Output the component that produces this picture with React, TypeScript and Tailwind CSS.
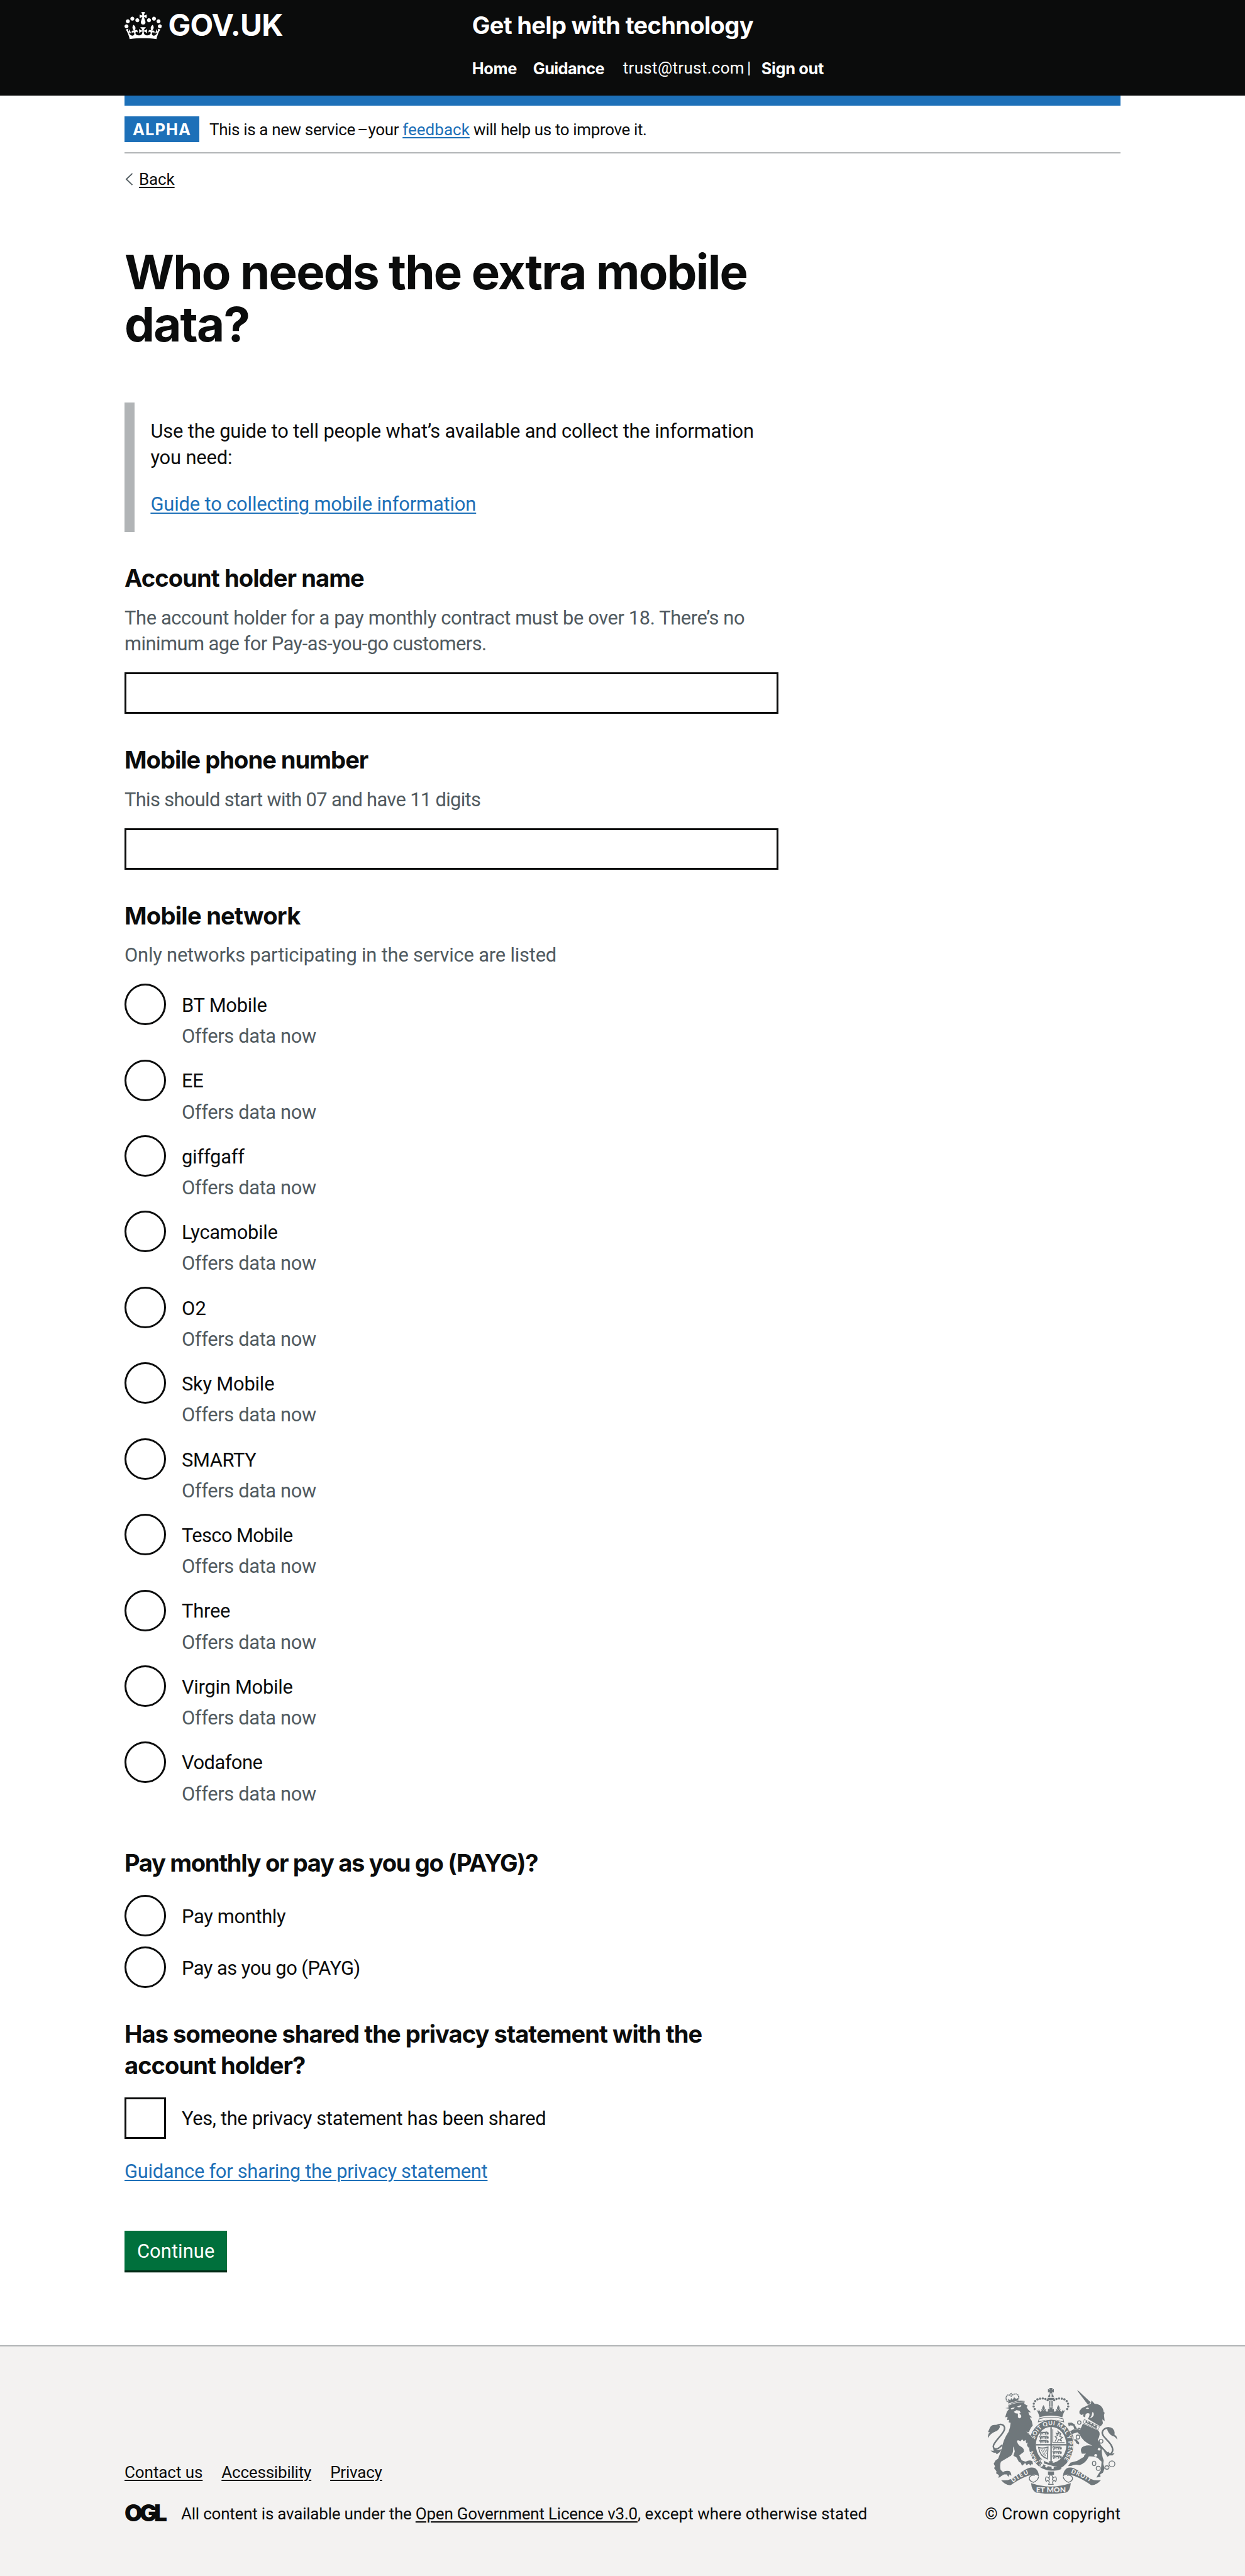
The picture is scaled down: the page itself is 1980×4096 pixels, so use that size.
import type { ReactNode } from "react";

const networks: { name: string; tracking: string }[] = [
  { name: "BT Mobile", tracking: "tracking-[-0.007em]" },
  { name: "EE", tracking: "tracking-[-0.01em]" },
  { name: "giffgaff", tracking: "tracking-[-0.007em]" },
  { name: "Lycamobile", tracking: "tracking-[-0.009em]" },
  { name: "O2", tracking: "tracking-[0.01em]" },
  { name: "Sky Mobile", tracking: "tracking-[-0.007em]" },
  { name: "SMARTY", tracking: "tracking-[-0.012em]" },
  { name: "Tesco Mobile", tracking: "tracking-[-0.02em]" },
  { name: "Three", tracking: "tracking-[-0.007em]" },
  { name: "Virgin Mobile", tracking: "tracking-[-0.009em]" },
  { name: "Vodafone", tracking: "tracking-[-0.017em]" },
];

const LINK = "underline decoration-[1.65px] underline-offset-[3px]";
const BODY = "font-['Roboto',sans-serif] text-[30.87px] leading-[41.25px]";
const SMALL = "font-['Roboto',sans-serif] text-[26px] leading-[33px]";
const HEADING = "font-['Inter',sans-serif] text-[38.13px] font-bold leading-[49.5px]";

function CrownIcon() {
  return (
    <svg viewBox="0 0 132 97" className="h-[43.6px] w-[59.4px] fill-current" aria-hidden="true">
      <path
        fillRule="evenodd"
        d="M25 30.2c3.5 1.5 7.7-.2 9.1-3.7 1.5-3.6-.2-7.8-3.9-9.2-3.6-1.4-7.6.3-9.1 3.9-1.4 3.5.3 7.5 3.9 9zM9 39.5c3.6 1.5 7.8-.2 9.2-3.7 1.5-3.6-.2-7.8-3.9-9.1-3.6-1.5-7.6.2-9.1 3.8-1.4 3.5.3 7.5 3.8 9zM4.4 57.2c3.5 1.5 7.7-.2 9.1-3.8 1.5-3.6-.2-7.7-3.9-9.1-3.5-1.5-7.6.3-9.1 3.8-1.4 3.5.3 7.6 3.9 9.1zm38.3-21.4c3.5 1.5 7.7-.2 9.1-3.8 1.5-3.6-.2-7.7-3.9-9.1-3.6-1.5-7.6.3-9.1 3.8-1.3 3.6.4 7.7 3.9 9.1zm64.4-5.6c-3.6 1.5-7.8-.2-9.1-3.7-1.5-3.6.2-7.8 3.8-9.2 3.6-1.4 7.7.3 9.2 3.9 1.3 3.5-.4 7.5-3.9 9zm15.9 9.3c-3.6 1.5-7.7-.2-9.1-3.7-1.5-3.6.2-7.8 3.7-9.1 3.6-1.5 7.7.2 9.2 3.8 1.5 3.5-.3 7.5-3.8 9zm4.7 17.7c-3.6 1.5-7.8-.2-9.2-3.8-1.5-3.6.2-7.7 3.9-9.1 3.6-1.5 7.7.3 9.2 3.8 1.3 3.5-.4 7.6-3.9 9.1zM89.3 35.8c-3.6 1.5-7.8-.2-9.2-3.8-1.4-3.6.2-7.7 3.9-9.1 3.6-1.5 7.7.3 9.2 3.8 1.4 3.6-.3 7.7-3.9 9.1zM69.7 17.7l8.9 4.7V9.3l-8.9 2.8c-.2-.3-.5-.6-.9-.9L72.4 0H59.6l3.5 11.2c-.3.3-.6.5-.9.9l-8.8-2.8v13.1l8.8-4.7c.3.3.6.7.9.9l-5 15.4v.1c-.2.8-.4 1.6-.4 2.4 0 4.1 3.1 7.5 7 8.1h.2c.3 0 .7.1 1 .1.4 0 .7 0 1-.1h.2c4-.6 7.1-4.1 7.1-8.1 0-.8-.1-1.7-.4-2.4V34l-5.1-15.4c.4-.2.7-.6 1-.9zM66 92.8c16.9 0 32.8 1.1 47.1 3.2 4-16.9 8.9-26.7 14-33.5l-9.6-3.4c1 4.9 1.1 7.2 0 10.2-1.5-1.4-3-4.3-4.2-8.7L108.6 76c2.8-2 5-3.2 7.5-3.3-4.4 9.4-10 11.9-13.6 11.2-4.3-.8-6.3-4.6-5.6-7.9 1-4.7 5.7-5.9 8-.5 4.3-8.7-3-11.4-7.6-8.8 7.1-7.2 7.9-13.5 2.1-21.1-8 6.1-8.1 12.3-4.5 20.8-4.7-5.4-12.1-2.5-9.5 6.2 3.4-5.2 7.9-2 7.2 3.1-.6 4.3-6.4 7.8-13.5 7.2-10.3-.9-10.9-8-11.2-13.8 2.5-.5 7.1 1.8 11 7.3L80.2 60c-4.1 4.4-8 5.3-12.3 5.4 1.4-4.4 8-11.6 8-11.6H55.5s6.4 7.2 7.9 11.6c-4.2-.1-8-1-12.3-5.4l1.4 16.4c3.9-5.5 8.5-7.7 10.9-7.3-.3 5.8-.9 12.8-11.1 13.8-7.2.6-12.9-2.9-13.5-7.2-.7-5 3.8-8.3 7.1-3.1 2.7-8.7-4.6-11.6-9.4-6.2 3.7-8.5 3.6-14.7-4.6-20.8-5.8 7.6-5 13.9 2.2 21.1-4.7-2.6-11.9.1-7.7 8.8 2.3-5.5 7.1-4.2 8.1.5.7 3.3-1.3 7.1-5.7 7.9-3.5.7-9-1.8-13.5-11.2 2.5.1 4.7 1.3 7.5 3.3l-4.7-15.4c-1.2 4.4-2.7 7.2-4.3 8.7-1.1-3-.9-5.3 0-10.2l-9.5 3.4c5 6.9 9.9 16.7 14 33.5 14.8-2.1 30.8-3.2 47.7-3.2z"
      />
    </svg>
  );
}

function CrownHalf() {
  const pearls = [
    [343, 188],
    [337, 173],
    [338, 157],
    [346, 142],
    [359, 132],
    [374, 128],
    [390, 127],
    [405, 130],
    [418, 137],
  ];
  return (
    <g>
      {pearls.map(([x, y]) => (
        <circle key={`${x}-${y}`} cx={x} cy={y} r="6.6" />
      ))}
      <path d="M438 226C412 226 390 229 371 236C368 220 362 205 354 194L366 200L366 190L376 204L384 196L380 188Q392 192 394 198Q398 190 410 188L405 198L415 204L424 192L428 206L438 208Z" />
      <path d="M394 165Q406 182 400 190L394 196L388 190Q382 182 394 165Z" />
    </g>
  );
}

function LionPassant({ x, y }: { x: number; y: number }) {
  return (
    <path
      transform={`translate(${x} ${y})`}
      d="M0 6L6 1L12 4L38 4L42 0M12 5L10 16L4 18M18 8L22 17M32 6L36 13L32 18M40 6L46 10L44 18M50 16Q54 8 46 2M2 10L10 10M20 6L34 7"
      fill="none"
      stroke="#6f777b"
      strokeWidth="5.5"
    />
  );
}

function RoyalArms() {
  const light = "#f3f2f1";
  return (
    <svg viewBox="72 66 750 612" className="h-[168.3px] w-[206.2px]" fill="#6f777b" role="img" aria-label="Royal coat of arms">
      <defs>
        <path id="garter-main" d="M343 364A100 118 0 1 1 480 506" />
        <path id="garter-left" d="M366 492A108 124 0 0 1 332 424" />
        <path id="ribbon-left" d="M218 614Q262 578 316 560" />
        <path id="ribbon-right" d="M552 556Q612 578 668 612" />
      </defs>

      {/* Lion */}
      <path d="M184 144Q170 120 186 108Q198 103 207 113Q224 96 240 102Q256 112 249 132" fill="none" stroke="#6f777b" strokeWidth="8" strokeLinecap="round" strokeDasharray="0 10.5" />
      <path d="M190 128L202 138L207 124L216 134L224 120L236 130L246 124L250 138L190 156ZM202 96L210 94L209 104L204 105Z" />
      <path d="M173 182L192 180L190 164Q230 142 262 140L285 141L283 158L304 170L296 176L304 190L322 207L306 206L312 222L328 236L314 238L326 256L332 284Q318 296 310 322L292 318Q318 346 336 370L346 402L340 414L330 404L326 424L316 404L308 412L298 396L306 376L294 386L290 366L280 374L270 362L262 374Q246 364 240 372Q246 398 268 408Q284 418 280 436Q266 446 254 456Q262 472 268 484L290 492Q314 480 330 490L334 510L326 504L320 516L310 504L296 512L288 500L270 516L262 498L252 494L238 468L220 458L228 432Q226 414 218 404Q222 440 206 458L148 492Q140 510 146 540L160 552Q172 542 196 546Q208 554 208 574L198 566L190 580L182 566L166 566L152 574L134 587L136 570L120 560L122 548L108 530L114 520L106 504L116 486L132 474L152 420Q160 366 192 320Q202 296 204 268L192 264L196 250L184 252L186 232L172 236L182 204L196 186Z" />
      <path d="M205 184Q218 178 228 180Q222 192 207 190ZM240 174L266 164Q264 178 250 178ZM222 204L238 194L256 198L262 210L254 214Q270 224 264 236Q256 246 246 236L246 214L232 212Z" fill={light} />
      <path d="M192 166Q232 148 284 146" fill="none" stroke={light} strokeWidth="3" />
      <path d="M154 396C120 436 88 416 112 384C138 346 176 316 168 292C162 272 134 274 122 286" fill="none" stroke="#6f777b" strokeWidth="9" />
      <path d="M72 356Q70 336 84 320Q68 328 78 310Q88 276 114 280Q140 276 142 290Q138 310 116 318Q88 328 72 356ZM88 428L106 430L102 412L126 426L154 420Q144 438 124 450L116 440Q104 444 88 428Z" />

      {/* Unicorn */}
      <path d="M588 80L598 84L668 150L652 164Z" />
      <path d="M602 200L616 182L648 168L668 156L672 138L690 158Q736 160 742 204L748 210L744 222L748 258L734 248L738 270Q732 284 722 288L650 244Q662 232 660 214Q646 208 638 218L634 236L622 230L626 218L612 222L602 212Z" />
      <path d="M638 184Q650 176 658 184Q650 190 638 184ZM684 210Q690 234 662 242Q676 226 676 206Z" fill={light} />
      <path d="M630 248L718 290L710 308L624 268Z" fill={light} stroke="#6f777b" strokeWidth="3" />
      <path d="M634 264L644 254L650 268L662 260L668 276L680 268L686 286L700 280L704 302Z" />
      <path d="M622 272L712 312Q728 332 708 366Q722 384 732 410Q728 452 742 484L740 506L748 530L738 556L722 566L724 580L700 584L710 566L726 542L730 492L706 470Q680 460 656 462Q640 500 602 512Q574 506 556 516L536 518L550 498L588 488L628 464Q630 452 640 446L616 446Q600 412 630 402Q650 394 676 400Q620 376 604 336L590 322L560 332Q572 352 566 364L584 362L602 384L598 392L584 386L578 372L560 362Q548 340 542 320L570 304L606 308Z" />
      <path d="M536 268L556 266L574 276L580 290L600 296L612 300L596 306L572 302L566 284L550 282L540 288Z" />
      <path d="M724 402C760 440 778 470 794 430C800 380 720 350 736 316C744 300 758 296 772 298" fill="none" stroke="#6f777b" strokeWidth="9" />
      <path d="M750 298Q772 286 794 300Q810 318 804 334L816 346L822 366Q806 344 790 342Q766 326 762 302ZM740 428L760 446L768 434L782 448L806 442L794 456L776 456L764 464Z" />
      <g fill="none" stroke="#6f777b" strokeWidth="5">
        <circle cx="601" cy="266" r="10" />
        <ellipse cx="593" cy="350" rx="10" ry="12" fill={light} />
        <circle cx="727" cy="374" r="11" />
        <ellipse cx="687" cy="502" rx="10" ry="13" />
        <circle cx="711" cy="531" r="12" />
        <ellipse cx="761" cy="526" rx="12" ry="10" />
        <circle cx="790" cy="505" r="17" />
      </g>
      <g fill={light}>
        <circle cx="716" cy="420" r="8" />
        <circle cx="696" cy="456" r="8" />
        <circle cx="590" cy="294" r="7" />
      </g>

      {/* Crown */}
      <CrownHalf />
      <g transform="matrix(-1 0 0 1 874 0)">
        <CrownHalf />
      </g>
      <path d="M427 66H447L443 76L454 72V92L443 88L447 98H427L431 88L420 92V72L431 76Z" />
      <path d="M420 118Q422 104 433 101V118ZM441 101Q452 104 454 118H441ZM416 123H458Q456 138 437 138Q418 138 416 123ZM427 141H434V174H427ZM440 141H447V174H440ZM424 178H450L443 190L454 186V206H420V186L431 190Z" />
      <path d="M369 244Q437 226 507 244L511 262Q437 240 364 262Z" fill={light} stroke="#6f777b" strokeWidth="4" />

      {/* Garter and shield */}
      <ellipse cx="438" cy="397" rx="131" ry="150" fill={light} />
      <ellipse cx="438" cy="397" rx="128" ry="147" />
      <ellipse cx="438" cy="395" rx="88" ry="104" fill={light} />
      <path d="M434 292H442V498H434ZM350 391H526V399H350Z" />
      <path d="M424 490L450 490L446 500H428Z" />
      <LionPassant x={370} y={318} />
      <LionPassant x={370} y={342} />
      <LionPassant x={370} y={366} />
      <LionPassant x={446} y={404} />
      <LionPassant x={446} y={430} />
      <LionPassant x={446} y={456} />
      <path d="M448 304V382H516M460 376L472 356L462 348L476 340L468 328L484 332L478 318L494 330L488 346L504 352L492 362L500 374L482 364L474 378" fill="none" stroke="#6f777b" strokeWidth="5" />
      <path d="M366 410Q390 418 420 408L416 476Q372 460 366 410Z" fill="none" stroke="#6f777b" strokeWidth="6" />
      <path d="M378 418L400 460M388 418L408 462M398 416L412 448M408 414L414 432" stroke="#6f777b" strokeWidth="3" />
      <g fill={light} className="font-['Lato',sans-serif] font-bold" fontSize="34">
        <text textLength="394" lengthAdjust="spacing">
          <textPath href="#garter-main">SOIT QUI MAL Y PENSE</textPath>
        </text>
        <text textLength="72" lengthAdjust="spacing">
          <textPath href="#garter-left">HON</textPath>
        </text>
      </g>
      <path d="M374 480Q364 492 378 498Q364 514 372 524Q380 528 386 518L500 540L504 532L396 502Q400 482 386 480Z" fill={light} />
      <path d="M392 508Q436 528 486 524L500 534Q440 560 390 518Z" />
      <circle cx="411" cy="519" r="7" fill={light} />
      <circle cx="447" cy="528" r="7" fill={light} />
      <path d="M378 486Q368 492 384 500Q368 512 376 520M292 318Q320 340 338 380" fill="none" stroke="#6f777b" strokeWidth="5" />
      <path d="M296 332L322 344Q340 366 346 402L340 414L330 404L326 424L316 404L304 408Z" />

      {/* Motto ribbon */}
      <path d="M148 598Q180 604 206 592L286 540Q318 518 345 530Q366 544 368 578Q352 562 326 570Q280 576 206 627Q176 632 148 598Z" />
      <path d="M727 598Q694 604 668 592L588 540Q556 518 530 530Q509 544 506 578Q522 562 548 570Q594 576 668 627Q698 632 727 598Z" />
      <path d="M366 578Q364 600 336 612Q310 604 312 586Q318 568 344 572M508 578Q510 600 538 612Q564 604 562 586Q556 568 530 572" fill="none" stroke="#6f777b" strokeWidth="5" />
      <path d="M322 616Q380 636 437 636Q494 636 552 616Q548 664 522 672Q437 684 352 672Q326 660 322 616Z" />
      <g fill={light} className="font-['Lato',sans-serif] font-black">
        <text fontSize="34" textLength="104" lengthAdjust="spacing">
          <textPath href="#ribbon-left">DIEU</textPath>
        </text>
        <text fontSize="34" textLength="124" lengthAdjust="spacing">
          <textPath href="#ribbon-right">DROIT</textPath>
        </text>
        <text x="437" y="668" fontSize="44" textAnchor="middle" textLength="172">
          ET MON
        </text>
      </g>
      <path d="M420 549H455V568H420Z" />
      <path d="M437 564Q454 582 444 600Q448 580 464 580Q474 592 464 606L454 600L446 610L450 624H424L428 610L420 600L410 606Q400 592 410 580Q426 580 430 600Q420 582 437 564Z" fill={light} stroke="#6f777b" strokeWidth="5" />
    </svg>
  );
}

function FieldHeading({ children, className }: { children: ReactNode; className: string }) {
  return <h2 className={`${HEADING} ${className}`}>{children}</h2>;
}

function Radio({ label, hint, className }: { label: string; hint?: string; className: string }) {
  return (
    <div className={hint ? "flex h-[120.45px] items-start" : "flex h-[82.5px] items-start"}>
      <span className="size-[66px] shrink-0 rounded-full border-[3.3px] border-[#0b0c0c]" />
      <div className={`${BODY} pl-[25px] pt-[13.8px]`}>
        <div className={className}>{label}</div>
        {hint && <div className="mt-[8px] tracking-[-0.0118em] text-[#505a5f]">{hint}</div>}
      </div>
    </div>
  );
}

export default function App() {
  return (
    <div className="flex h-[4096px] w-[1980px] flex-col overflow-hidden bg-white text-[#0b0c0c]">
      <header className="h-[152px] shrink-0 bg-[#0b0c0c] px-[198px] text-white">
        <div className="flex">
          <div className="flex w-[552.8px] gap-[10px] pt-[19px]">
            <CrownIcon />
            <span className="-mt-[8.6px] h-[60px] font-['Inter',sans-serif] text-[47.7px] font-bold leading-[60px] tracking-[-0.0155em]">
              GOV.UK
            </span>
          </div>
          <div className="pt-[16.2px] whitespace-nowrap">
            <div className={`${HEADING} tracking-[-0.0185em]`}>Get help with technology</div>
            <nav className="mt-[26.2px] flex font-['Inter',sans-serif] text-[25.4px] font-bold leading-[33px]">
              <span className="w-[97px] tracking-[-0.0176em]">Home</span>
              <span className="w-[143px] tracking-[-0.0254em]">Guidance</span>
              <span className="w-[220px] font-['Roboto',sans-serif] text-[26px] font-normal tracking-[0.0117em]">
                trust@trust.com<span className="tracking-[-0.09em]"> </span>|
              </span>
              <span className="tracking-[-0.0147em]">Sign out</span>
            </nav>
          </div>
        </div>
      </header>

      <main className="mx-[198px] flex shrink-0 flex-col items-start border-t-[16.5px] border-[#1d70b8]">
        <div className="flex h-[76px] w-full items-start border-b-2 border-[#b1b4b6] pt-[17px]">
          <strong className="h-[41px] w-[119px] bg-[#1d70b8] text-center font-['Inter',sans-serif] text-[25.4px] font-bold leading-[41px] tracking-[0.04em] text-white">
            ALPHA
          </strong>
          <p className={`${SMALL} ml-[16px] mt-[5px] whitespace-nowrap tracking-[-0.014em]`}>
            This is a new service<span className="tracking-[-0.12em]"> – </span>your{" "}
            <a className={`${LINK} tracking-[0.001em] text-[#1d70b8]`}>feedback</a> will help us to improve it.
          </p>
        </div>

        <a className="mt-[24.6px] flex h-[33px] items-center">
          <svg viewBox="0 0 14 22" className="ml-[1px] h-[20px] w-[13px]" fill="none" stroke="#505a5f" strokeWidth="2">
            <path d="M12.5 1L2 11L12.5 21" />
          </svg>
          <span className={`${SMALL} ${LINK} ml-[9px] tracking-[-0.005em]`}>Back</span>
        </a>

        <h1 className="mt-[89.6px] w-[1040px] font-['Inter',sans-serif] text-[76.2px] font-bold leading-[82.5px] tracking-[-0.0239em]">
          Who needs the extra mobile data?
        </h1>

        <div className={`${BODY} mt-[84px] h-[206px] w-[1040px] border-l-[16.5px] border-[#b1b4b6] pl-[25.4px] pt-[25.2px]`}>
          <p className="whitespace-nowrap tracking-[-0.0051em]">
            Use the guide to tell people what’s available and collect the information
            <br />
            you need:
          </p>
          <a className={`${LINK} mt-[33.2px] block tracking-[-0.0047em] text-[#1d70b8]`}>Guide to collecting mobile information</a>
        </div>

        <FieldHeading className="mt-[49.2px] tracking-[-0.0243em]">Account holder name</FieldHeading>
        <p className={`${BODY} mt-[17px] tracking-[-0.0125em] whitespace-nowrap text-[#505a5f]`}>
          The account holder for a pay monthly contract must be over 18. There’s no
          <br />
          <span className="tracking-[-0.0175em]">minimum age for Pay-as-you-go customers.</span>
        </p>
        <input className="mt-[24.8px] h-[66px] w-[1039.5px] border-[3.3px] border-[#0b0c0c] px-2" />

        <FieldHeading className="mt-[48.9px] tracking-[-0.0264em]">Mobile phone number</FieldHeading>
        <p className={`${BODY} mt-[17.2px] tracking-[-0.0215em] text-[#505a5f]`}>This should start with 07 and have 11 digits</p>
        <input className="mt-[24.7px] h-[66px] w-[1039.5px] border-[3.3px] border-[#0b0c0c] px-2" />

        <FieldHeading className="mt-[48.9px] tracking-[-0.0195em]">Mobile network</FieldHeading>
        <p className={`${BODY} mt-[16.8px] tracking-[-0.0061em] text-[#505a5f]`}>Only networks participating in the service are listed</p>
        <div className="mt-[25px] flex flex-col">
          {networks.map((n) => (
            <Radio key={n.name} label={n.name} hint="Offers data now" className={n.tracking} />
          ))}
        </div>

        <FieldHeading className="mt-[48.9px] tracking-[-0.0354em]">Pay monthly or pay as you go (PAYG)?</FieldHeading>
        <div className="mt-[25.4px] flex flex-col">
          <Radio label="Pay monthly" className="tracking-[-0.011em]" />
          <Radio label="Pay as you go (PAYG)" className="tracking-[-0.017em]" />
        </div>

        <FieldHeading className="mt-[32.4px] tracking-[-0.0255em] whitespace-nowrap">
          Has someone shared the privacy statement with the
          <br />
          account holder?
        </FieldHeading>
        <div className="mt-[25.4px] flex h-[66px]">
          <span className="size-[66px] border-[3.3px] border-[#0b0c0c]" />
          <span className={`${BODY} pl-[25px] pt-[13.8px] tracking-[-0.0106em]`}>Yes, the privacy statement has been shared</span>
        </div>
        <a className={`${BODY} ${LINK} mt-[31.2px] tracking-[-0.0091em] text-[#1d70b8]`}>Guidance for sharing the privacy statement</a>

        <button className={`${BODY} mt-[74.4px] h-[62.7px] w-[163.3px] bg-[#00703c] pt-[2px] tracking-[0.003em] text-white shadow-[0_3.3px_0_#002d18]`}>
          Continue
        </button>
      </main>

      <footer className="mt-[118.8px] flex grow items-end justify-between border-t-2 border-[#b1b4b6] bg-[#f3f2f1] px-[198px] pb-[82.4px]">
        <div className={SMALL}>
          <div className="flex gap-[30px]">
            <a className={`${LINK} tracking-[-0.003em]`}>Contact us</a>
            <a className={`${LINK} tracking-[-0.0079em]`}>Accessibility</a>
            <a className={`${LINK} tracking-[-0.008em]`}>Privacy</a>
          </div>
          <div className="mt-[33px] flex h-[33px]">
            <span className="w-[90px] font-['Inter',sans-serif] text-[37px] font-black leading-[30px] tracking-[-0.13em]">OGL</span>
            <p className="whitespace-nowrap tracking-[-0.0085em]">
              All content is available under the <a className={LINK}>Open Government Licence v3.0</a>
              <span className="tracking-[0.001em]">, except where otherwise stated</span>
            </p>
          </div>
        </div>
        <div className="flex flex-col items-center">
          <RoyalArms />
          <span className={`${SMALL} mt-[15.6px] tracking-[0.001em]`}>© Crown copyright</span>
        </div>
      </footer>
    </div>
  );
}
